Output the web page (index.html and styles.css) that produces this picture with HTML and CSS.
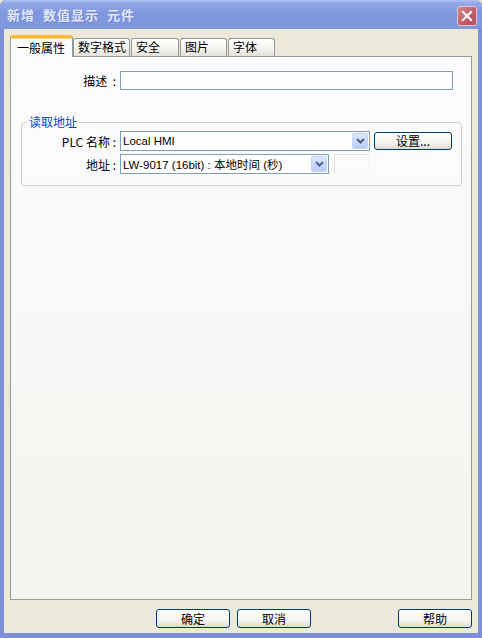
FILE: index.html
```html
<!DOCTYPE html>
<html>

<head>
    <meta charset="UTF-8" />
    <title>新增 数值显示 元件</title>
    <link rel="stylesheet" href="styles.css">
</head>

<body>
    <div class="window">
        <div class="titlebar">
            <span class="title">新增 数值显示 元件</span>
            <span class="close">
                <svg width="12" height="12" viewBox="0 0 12 12">
                    <path d="M2 2 L10 10 M10 2 L2 10" stroke="#fff" stroke-width="2.2" stroke-linecap="square" />
                </svg>
            </span>
        </div>
        <div class="client">
            <div class="tabs">
                <div class="tab active">一般属性</div>
                <div class="tab w57">数字格式</div>
                <div class="tab w48">安全</div>
                <div class="tab w47">图片</div>
                <div class="tab w47">字体</div>
            </div>
            <div class="panel">
                <div class="row desc-row">
                    <label class="lbl lbl-panel">描述 &nbsp;:</label>
                    <div class="textbox desc"></div>
                </div>
                <fieldset class="group">
                    <legend>读取地址</legend>
                    <div class="row">
                        <label class="lbl lbl-group">PLC 名称 :</label>
                        <div class="combo plc">
                            <span class="value">Local HMI</span>
                            <span class="drop">
                                <svg width="9" height="6" viewBox="0 0 9 6">
                                    <path d="M1 1 L4.5 4.5 L8 1" stroke="#4d6185" stroke-width="2" fill="none" />
                                </svg>
                            </span>
                        </div>
                        <div class="btn set">设置...</div>
                    </div>
                    <div class="row">
                        <label class="lbl lbl-group">地址 :</label>
                        <div class="combo addr">
                            <span class="value">LW-9017 (16bit) : 本地时间 (秒)</span>
                            <span class="drop">
                                <svg width="9" height="6" viewBox="0 0 9 6">
                                    <path d="M1 1 L4.5 4.5 L8 1" stroke="#4d6185" stroke-width="2" fill="none" />
                                </svg>
                            </span>
                        </div>
                        <div class="small-box"></div>
                    </div>
                </fieldset>
            </div>
            <div class="buttons">
                <div class="btn">确定</div>
                <div class="btn">取消</div>
                <div class="btn help">帮助</div>
            </div>
        </div>
    </div>
</body>

</html>
```

FILE: styles.css
```css
* {
    margin: 0;
    padding: 0;
    box-sizing: border-box;
}

body {
    background: #ece9d8;
    font-family: "Liberation Sans", "Noto Sans CJK SC", sans-serif;
    font-size: 12px;
    color: #000;
}

.window {
    width: 482px;
    height: 638px;
    display: flex;
    flex-direction: column;
    background: #7c8fdb;
    border-radius: 6px 6px 0 0;
    overflow: hidden;
}

.titlebar {
    height: 29px;
    display: flex;
    align-items: center;
    justify-content: space-between;
    padding: 0 5px 0 7px;
    background: linear-gradient(#b3c3f1 0, #93a8e6 3px, #7f97df 45%, #8198df 100%);
}

.title {
    font-family: "Noto Sans CJK SC", sans-serif;
    font-weight: bold;
    font-size: 13px;
    color: #e2e9fa;
    text-shadow: 1px 1px 0 #7084cc;
    letter-spacing: 1px;
    word-spacing: 4px;
}

.close {
    width: 20px;
    height: 20px;
    display: flex;
    align-items: center;
    justify-content: center;
    background: linear-gradient(135deg, #d48a92, #c05a66 60%, #b04f5a);
    border: 1px solid #e8c2c8;
    border-radius: 3px;
    margin-top: 2px;
}

.client {
    flex: 1;
    display: flex;
    flex-direction: column;
    background: #ece9d8;
    margin: 0 4px 5px 4px;
}

.tabs {
    display: flex;
    align-items: flex-end;
    padding: 5px 0 0 6px;
    height: 27px;
    position: relative;
    z-index: 1;
}

.tab {
    height: 18px;
    line-height: 16px;
    padding-left: 4px;
    border: 1px solid #919b9c;
    border-bottom: none;
    border-radius: 3px 3px 0 0;
    background: linear-gradient(#ffffff, #f3f2ee 60%, #e4e2da);
    font-family: "Noto Sans CJK SC", sans-serif;
    margin-left: 1px;
}

.tab.active {
    width: 63px;
    height: 22px;
    line-height: 20px;
    padding-left: 6px;
    margin-left: 0;
    margin-bottom: -1px;
    background: #fcfcfe;
    border-top: 3px solid #f8b83c;
    box-shadow: inset 0 1px 0 #ffd880;
}

.tab.active + .tab {
    margin-left: 0;
}

.w57 {
    width: 57px;
}

.w48 {
    width: 48px;
}

.w47 {
    width: 47px;
}

.panel {
    flex: 1;
    margin: 0 6px;
    border: 1px solid #919b9c;
    background: linear-gradient(#fcfcfe, #f4f3ee);
    padding-top: 14px;
}

.row {
    display: flex;
    align-items: center;
    gap: 4px;
}

.lbl {
    text-align: right;
    font-family: "Noto Sans CJK SC", sans-serif;
    white-space: nowrap;
}

.lbl-panel {
    width: 105px;
}

.lbl-group {
    width: 94px;
}

.textbox {
    height: 19px;
    border: 1px solid #7f9db9;
    background: #fff;
}

.desc {
    width: 333px;
}

.group {
    margin: 25px 9px 0 10px;
    border: 1px solid #d0d0bf;
    border-radius: 4px;
    padding: 2px 0 11px 0;
    display: flex;
    flex-direction: column;
    gap: 3px;
}

.group legend {
    margin-left: 5px;
    padding: 0 2px;
    color: #0046d5;
    font-family: "Noto Sans CJK SC", sans-serif;
    line-height: 14px;
}

.combo {
    height: 20px;
    border: 1px solid #7f9db9;
    background: #fff;
    display: flex;
    align-items: center;
    justify-content: space-between;
    padding: 1px 1px 1px 2px;
}

.combo .value {
    font-size: 11.5px;
    font-family: "Liberation Sans", "Noto Sans CJK SC", sans-serif;
}

.plc {
    width: 250px;
}

.addr {
    width: 209px;
}

.drop {
    width: 16px;
    height: 16px;
    display: flex;
    align-items: center;
    justify-content: center;
    background: linear-gradient(#dbe6fd, #b9cdfa);
    border: 1px solid #c3d3fd;
    border-radius: 2px;
}

.small-box {
    width: 35px;
    height: 20px;
    border: 1px solid #e4e2d8;
    border-right-color: #f6f5f1;
    border-bottom-color: #f6f5f1;
    margin-left: 1px;
}

.btn {
    width: 74px;
    height: 19px;
    line-height: 17px;
    text-align: center;
    border: 1px solid #003c74;
    border-radius: 3px;
    background: linear-gradient(#ffffff, #f5f4ef 60%, #dedbd0);
    font-family: "Noto Sans CJK SC", sans-serif;
}

.set {
    width: 78px;
    height: 18px;
    line-height: 16px;
}

.buttons {
    display: flex;
    gap: 7px;
    padding: 9px 6px 0 152px;
    height: 33px;
}

.help {
    margin-left: auto;
}
```
